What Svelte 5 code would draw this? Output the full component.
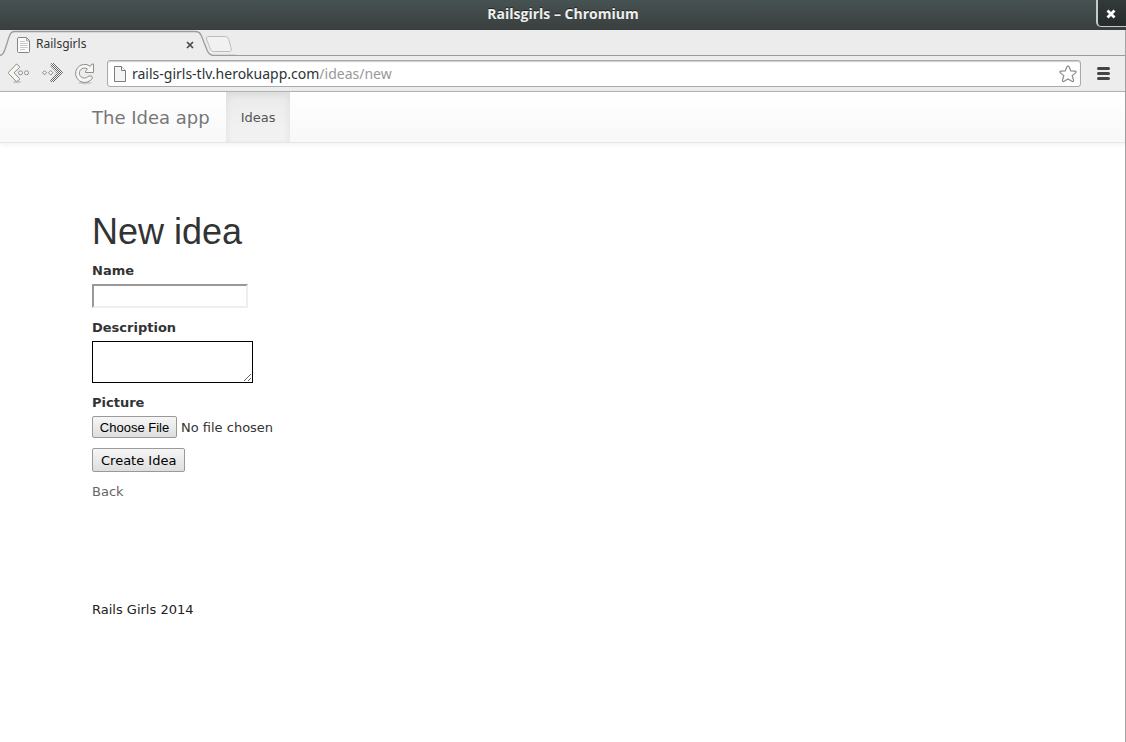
<script>
  let name = $state('');
  let description = $state('');
  let files = $state();
  let fileLabel = $derived(files?.length ? files[0].name : 'No file chosen');
</script>

<div class="window">
  <header class="titlebar">
    <span class="title">Railsgirls – Chromium</span>
    <button class="close-window" aria-label="Close window">
      <svg width="10" height="10" viewBox="0 0 10 10"><path d="M1.5 1.5 8.5 8.5M8.5 1.5 1.5 8.5" stroke="#fff" stroke-width="2.8" /></svg>
    </button>
  </header>

  <div class="browser">
    <div class="tabs">
      <div class="tab">
        <svg class="tab-shape" width="236" height="26" viewBox="0 0 236 26" aria-hidden="true">
          <path d="M0 25.5C3 25 4 22.500 5 19.500L9 7C10.500 3 11.500 1.500 15 1.500H195C199 1.500 200 3 201.500 6L207 20C208.500 24 210 25.500 214 25.500V26H0Z" fill="#ededed" />
          <path d="M0 25.500C3 25 4 22.500 5 19.500L9 7C10.500 3 11.500 1.500 15 1.500H195C199 1.500 200 3 201.500 6L207 20C208.500 24 210 25.500 214 25.500H236" fill="none" stroke="#9b9b9b" stroke-width="1.300" />
          <path d="M209 6.500H225C227 6.500 228 7.500 228.700 9.500L231 17.500C231.800 20 231.500 21.500 229 21.500H214C212 21.500 211 20.500 210.200 18.500L206.500 9C206 7.500 207 6.500 209 6.500Z" fill="#f1f1f1" stroke="#bdbdbd" />
        </svg>
        <svg class="page-icon" width="14" height="16" viewBox="0 0 14 16" aria-hidden="true">
          <path d="M2 .5H9.500L12.500 3.500V14.500Q12.500 15.500 11.500 15.500H1.500Q.5 15.500 .5 14.500V1.500Q.5.5 2 .5Z" fill="#fafafa" stroke="#858585" />
          <path d="M9.500 1V4H12" fill="#ddd" stroke="#aaa" />
          <path d="M3 4.500H8M3 6.500H10.500M3 8.500H10.500M3 10.500H10.500M3 12.500H8" stroke="#c8c8c8" />
        </svg>
        <span class="tab-title">Railsgirls</span>
        <button class="tab-close" aria-label="Close tab">
          <svg width="8" height="8" viewBox="0 0 8 8"><path d="M1 1 7 7M7 1 1 7" stroke="#4a4a4a" stroke-width="1.700" /></svg>
        </button>
      </div>
    </div>

    <div class="toolbar">
      <button class="tool" aria-label="Back">
        <svg width="22" height="22" viewBox="0 0 22 22">
          <ellipse cx="9" cy="19" rx="4" ry="1.200" fill="#c9c9c9" />
          <path d="M8.500 1 11.500 3.500V4.500L6 9.800 11.500 15.500V16.500L8.500 18.700 .6 10.500V9.300Z" fill="#f7f7f2" stroke="#8e8e8e" stroke-linejoin="round" />
          <circle cx="12.500" cy="9.800" r="2" fill="#f7f7f3" stroke="#8e8e8e" />
          <circle cx="18.500" cy="9.800" r="2" fill="#f7f7f3" stroke="#8e8e8e" />
        </svg>
      </button>
      <button class="tool" aria-label="Forward">
        <svg width="22" height="22" viewBox="0 0 22 22">
          <defs>
            <pattern id="dither" width="2" height="2" patternUnits="userSpaceOnUse">
              <rect width="2" height="2" fill="#f4f4f4" /><path d="M0 0H1V1H0ZM1 1H2V2H1Z" fill="#666" />
            </pattern>
          </defs>
          <path d="M13 0 22 9.500 13 19H10L9 17 15.500 9.500 9 3 10.500 0Z" fill="url(#dither)" />
          <path d="M1.500 9.800 3.500 7.800 5.500 9.800 3.500 11.800ZM7.500 9.800 9.800 7.500 12 9.800 9.800 12.100Z" fill="#f7f7f7" stroke="#888" />
        </svg>
      </button>
      <button class="tool" aria-label="Reload">
        <svg width="22" height="22" viewBox="0 0 22 22">
          <ellipse cx="11" cy="20" rx="7" ry="1.200" fill="#c9c9c9" />
          <path d="M16.300 3.300 18 1H19.500V9.500H11.500V8L13.500 6.200A5 5 0 1 0 14 13.500L15 13H17.500L18.500 15A9.100 9.100 0 1 1 16.300 3.300Z" fill="#f7f7f2" stroke="#8e8e8e" stroke-linejoin="round" />
        </svg>
      </button>
      <div class="address">
        <svg width="12" height="16" viewBox="0 0 12 16" aria-hidden="true">
          <path d="M.5.5H7.500L11.500 4.500V15.500H.5Z" fill="#f4f4f4" stroke="#7d7d7d" />
          <path d="M7.500.5V4.500H11.500" fill="#fff" stroke="#7d7d7d" />
        </svg>
        <span class="url">rails-girls-tlv.herokuapp.com<span class="path">/ideas/new</span></span>
        <button class="star" aria-label="Bookmark this page">
          <svg width="18" height="18" viewBox="0 0 18 18"><path d="M9 .8Q9.800 .8 10.200 2L11.800 6 16.200 6.200Q17.600 6.500 16.800 7.600L13.200 10.600 14.500 15.200Q14.600 16.900 13.200 16.500L9 14 4.800 16.500Q3.400 16.900 3.500 15.200L4.800 10.600 1.200 7.600Q.4 6.500 1.800 6.200L6.200 6 7.800 2Q8.200 .8 9 .8Z" fill="#fff" stroke="#8a8a8a" stroke-width="1.200" /></svg>
        </button>
      </div>
      <button class="menu" aria-label="Menu">
        <svg width="13" height="13" viewBox="0 0 13 13"><path d="M1.500 1.500H11.500M1.500 6.500H11.500M1.500 11.500H11.500" stroke="#444" stroke-width="3" stroke-linecap="round" /></svg>
      </button>
    </div>

    <nav class="navbar">
      <div class="container nav-items">
        <a class="brand" href="#home">The Idea app</a>
        <a class="nav-link" href="#ideas">Ideas</a>
      </div>
    </nav>

    <main class="container content">
      <h1>New idea</h1>
      <form onsubmit={(event) => event.preventDefault()}>
        <div class="field">
          <label for="name">Name</label>
          <input id="name" class="text" type="text" bind:value={name} />
        </div>
        <div class="field">
          <label for="description">Description</label>
          <textarea id="description" bind:value={description}></textarea>
        </div>
        <div class="field">
          <label for="picture">Picture</label>
          <div class="upload">
            <input id="picture" class="file" type="file" bind:files />
            <span>{fileLabel}</span>
          </div>
        </div>
        <button class="submit" type="submit">Create Idea</button>
      </form>
      <a class="back" href="#ideas">Back</a>
    </main>

    <footer class="container footer">Rails Girls 2014</footer>
  </div>
</div>

<style>
  :global(body) {
    margin: 0;
    background: #fff;
  }

  .window, .window * {
    box-sizing: border-box;
  }

  .window {
    display: flex;
    flex-direction: column;
    min-height: 100vh;
    color: #333;
    font: 13px/18px "DejaVu Sans", Verdana, sans-serif;
  }

  svg {
    display: block;
    flex: none;
  }

  button {
    padding: 0;
    border: 0;
    background: none;
    font: inherit;
  }

  .titlebar {
    position: relative;
    display: flex;
    align-items: center;
    justify-content: center;
    height: 30px;
    background: linear-gradient(#475252, #393f3e);
    color: #eee;
    font: bold 14px/28px "Open Sans", "Noto Sans", sans-serif;
    text-shadow: 0 -1px 0 #222;
  }

  .title {
    padding-bottom: 2px;
  }

  .close-window {
    position: absolute;
    top: -2px;
    right: 0;
    display: grid;
    place-items: center;
    width: 30px;
    height: 29px;
    padding: 3px 2px 0 0;
    border: solid #c8caca;
    border-width: 0 0 1px 2px;
    border-radius: 0 0 0 5px;
    background: linear-gradient(#343b3b, #262b2b);
  }

  .browser {
    flex: 1;
    border-right: 1px solid #a3a3a3;
  }

  .tabs {
    height: 26px;
    background: linear-gradient(#ececec 25px, #9b9b9b 25px);
  }

  .tab {
    position: relative;
    display: flex;
    align-items: center;
    width: 236px;
    height: 26px;
    padding: 3px 0 0 17px;
  }

  .tab-shape {
    position: absolute;
    top: 0;
    left: 0;
  }

  .page-icon, .tab-title, .tab-close {
    position: relative;
  }

  .tab-title {
    width: 155px;
    padding: 0 0 2px 5px;
    font: 12px/16px "Noto Sans", "Open Sans", sans-serif;
  }

  .toolbar {
    display: flex;
    align-items: center;
    height: 36px;
    padding: 0 15px 0 8px;
    gap: 11px;
    border-bottom: 1px solid #b5b5b5;
    background: #ededed;
  }

  .address {
    display: flex;
    flex: 1;
    align-items: center;
    height: 27px;
    padding: 0 3px 0 6px;
    gap: 6px;
    border: 1px solid #aaa;
    border-radius: 3px;
    background: #fff;
    box-shadow: inset 0 1px 1px #ccc;
  }

  .url {
    flex: 1;
    color: #2e3436;
    font: 14px/20px "Noto Sans", "Open Sans", sans-serif;
  }

  .path {
    color: #999;
  }

  .menu {
    padding-left: 5px;
  }

  .navbar {
    height: 51px;
    border-bottom: 1px solid #e7e7e7;
    background: linear-gradient(#fff, #f8f8f8);
    box-shadow: 0 1px 5px rgba(0, 0, 0, 0.075);
  }

  .container {
    width: 100%;
    max-width: 971px;
    margin: 0 auto;
    padding: 0 15px;
  }

  .nav-items {
    display: flex;
  }

  a {
    color: #666;
    text-decoration: none;
  }

  .brand {
    padding: 2px 16px 0 0;
    color: #777;
    font-size: 18px;
    line-height: 48px;
  }

  .nav-link {
    padding: 2px 15px 0;
    background: linear-gradient(#ebebeb, #f3f3f3);
    box-shadow: inset 0 3px 9px rgba(0, 0, 0, 0.075);
    color: #555;
    line-height: 48px;
  }

  .content {
    padding-top: 69px;
  }

  h1 {
    margin: 0 0 10px;
    font: 36px/40px "Liberation Sans", Arial, sans-serif;
  }

  .field {
    margin-bottom: 11px;
  }

  .field:last-of-type {
    margin-bottom: 10px;
  }

  label {
    display: block;
    margin-bottom: 4px;
    font-weight: bold;
  }

  .text {
    display: block;
    width: 156px;
    height: 24px;
    border: 2px solid #eee;
    border-color: #999 #eee #eee #999;
  }

  textarea {
    display: block;
    width: 161px;
    height: 42px;
    border: 1px solid #000;
    border-radius: 0;
    background: #fff;
  }

  .upload {
    display: flex;
    align-items: center;
    gap: 4px;
  }

  .upload span {
    padding-top: 2px;
  }

  .file {
    width: 85px;
    color: transparent;
    font: 13px/18px "Liberation Sans", Arial, sans-serif;
  }

  .file::file-selector-button, .submit {
    border: 1px solid #999;
    border-radius: 2px;
    background: linear-gradient(#f6f6f6, #dedede);
    color: #000;
  }

  .file::file-selector-button {
    width: 85px;
    height: 22px;
    margin: 0;
    padding: 2px 0 0;
    font: inherit;
  }

  .submit {
    display: block;
    height: 24px;
    padding: 2px 8px 0;
  }

  .back {
    display: block;
    margin-top: 11px;
  }

  .footer {
    margin-top: 100px;
    color: #222;
  }
</style>
